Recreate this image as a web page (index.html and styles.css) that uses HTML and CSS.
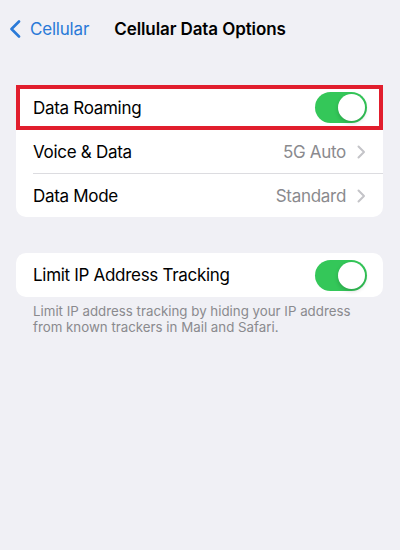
FILE: index.html
```html
<!DOCTYPE html>
<html>
<head>
<meta charset="utf-8">
<link rel="stylesheet" href="styles.css">
</head>
<body>
<div class="screen">
  <header class="nav">
    <a class="back">
      <svg class="back-icon" width="12" height="18" viewBox="0 0 12 18"><path d="M10 1.5 L2.5 9 L10 16.5" fill="none" stroke="#2a7ad8" stroke-width="2.6" stroke-linecap="round" stroke-linejoin="round"/></svg>
      <span>Cellular</span>
    </a>
    <h1 class="title">Cellular Data Options</h1>
    <span></span>
  </header>

  <section class="card first">
    <div class="row highlighted">
      <span class="label">Data Roaming</span>
      <span class="toggle"><span class="knob"></span></span>
      <span class="highlight"></span>
    </div>
    <div class="row">
      <span class="label">Voice &amp; Data</span>
      <span class="value">5G Auto<svg class="chev" width="9" height="14" viewBox="0 0 9 14"><path d="M1.5 1.5 L7 7 L1.5 12.5" fill="none" stroke="#c4c4c8" stroke-width="2" stroke-linecap="round" stroke-linejoin="round"/></svg></span>
    </div>
    <div class="row">
      <span class="label">Data Mode</span>
      <span class="value">Standard<svg class="chev" width="9" height="14" viewBox="0 0 9 14"><path d="M1.5 1.5 L7 7 L1.5 12.5" fill="none" stroke="#c4c4c8" stroke-width="2" stroke-linecap="round" stroke-linejoin="round"/></svg></span>
    </div>
  </section>

  <section class="card second">
    <div class="row tall">
      <span class="label">Limit IP Address Tracking</span>
      <span class="toggle"><span class="knob"></span></span>
    </div>
  </section>
  <p class="footnote">Limit IP address tracking by hiding your IP address from known trackers in Mail and Safari.</p>
</div>
</body>
</html>
```

FILE: styles.css
```css
html, body {
  margin: 0;
  padding: 0;
  background: #f0f0f5;
}
body {
  font-family: Inter, "Noto Sans", "Liberation Sans", sans-serif;
  color: #000;
  width: 400px;
  height: 550px;
  overflow: hidden;
}
.screen {
  display: flex;
  flex-direction: column;
}
.nav {
  display: grid;
  grid-template-columns: 1fr auto 1fr;
  align-items: center;
  height: 38px;
  padding-top: 10px;
}
.back {
  display: flex;
  align-items: center;
  gap: 9px;
  padding-left: 9px;
  color: #2a7ad8;
  font-size: 17px;
  letter-spacing: -0.2px;
}
.back-icon {
  display: block;
}
.title {
  margin: 0;
  font-size: 17px;
  font-weight: 600;
  letter-spacing: -0.1px;
}
.card {
  background: #fff;
  border-radius: 10px;
  margin: 0 17px 0 16px;
}
.card.first {
  margin-top: 38px;
}
.card.second {
  margin-top: 36px;
}
.row {
  position: relative;
  display: flex;
  align-items: center;
  justify-content: space-between;
  height: 43px;
  margin-left: 17px;
  padding-right: 16px;
  border-bottom: 0.5px solid #dcdce0;
  font-size: 17px;
  letter-spacing: -0.3px;
}
.row:last-child {
  border-bottom: none;
}
.row.tall {
  height: 44px;
}
.value {
  display: flex;
  align-items: center;
  gap: 11px;
  color: #8a8a8e;
}
.chev {
  display: block;
  margin-right: 1px;
}
.toggle {
  position: relative;
  width: 52px;
  height: 31px;
  border-radius: 16px;
  background: #34c759;
}
.knob {
  position: absolute;
  top: 2px;
  right: 2px;
  width: 27px;
  height: 27px;
  border-radius: 50%;
  background: #fff;
  box-shadow: 0 2px 4px rgba(0, 0, 0, 0.18);
}
.highlight {
  position: absolute;
  left: -17px;
  right: 0;
  top: -1px;
  bottom: -1px;
  border: 4.5px solid #e11e2d;
  pointer-events: none;
}
.footnote {
  margin: 7px 20px 0 33px;
  font-size: 13.3px;
  line-height: 15.5px;
  color: #8a8a8e;
  letter-spacing: 0;
}
```
